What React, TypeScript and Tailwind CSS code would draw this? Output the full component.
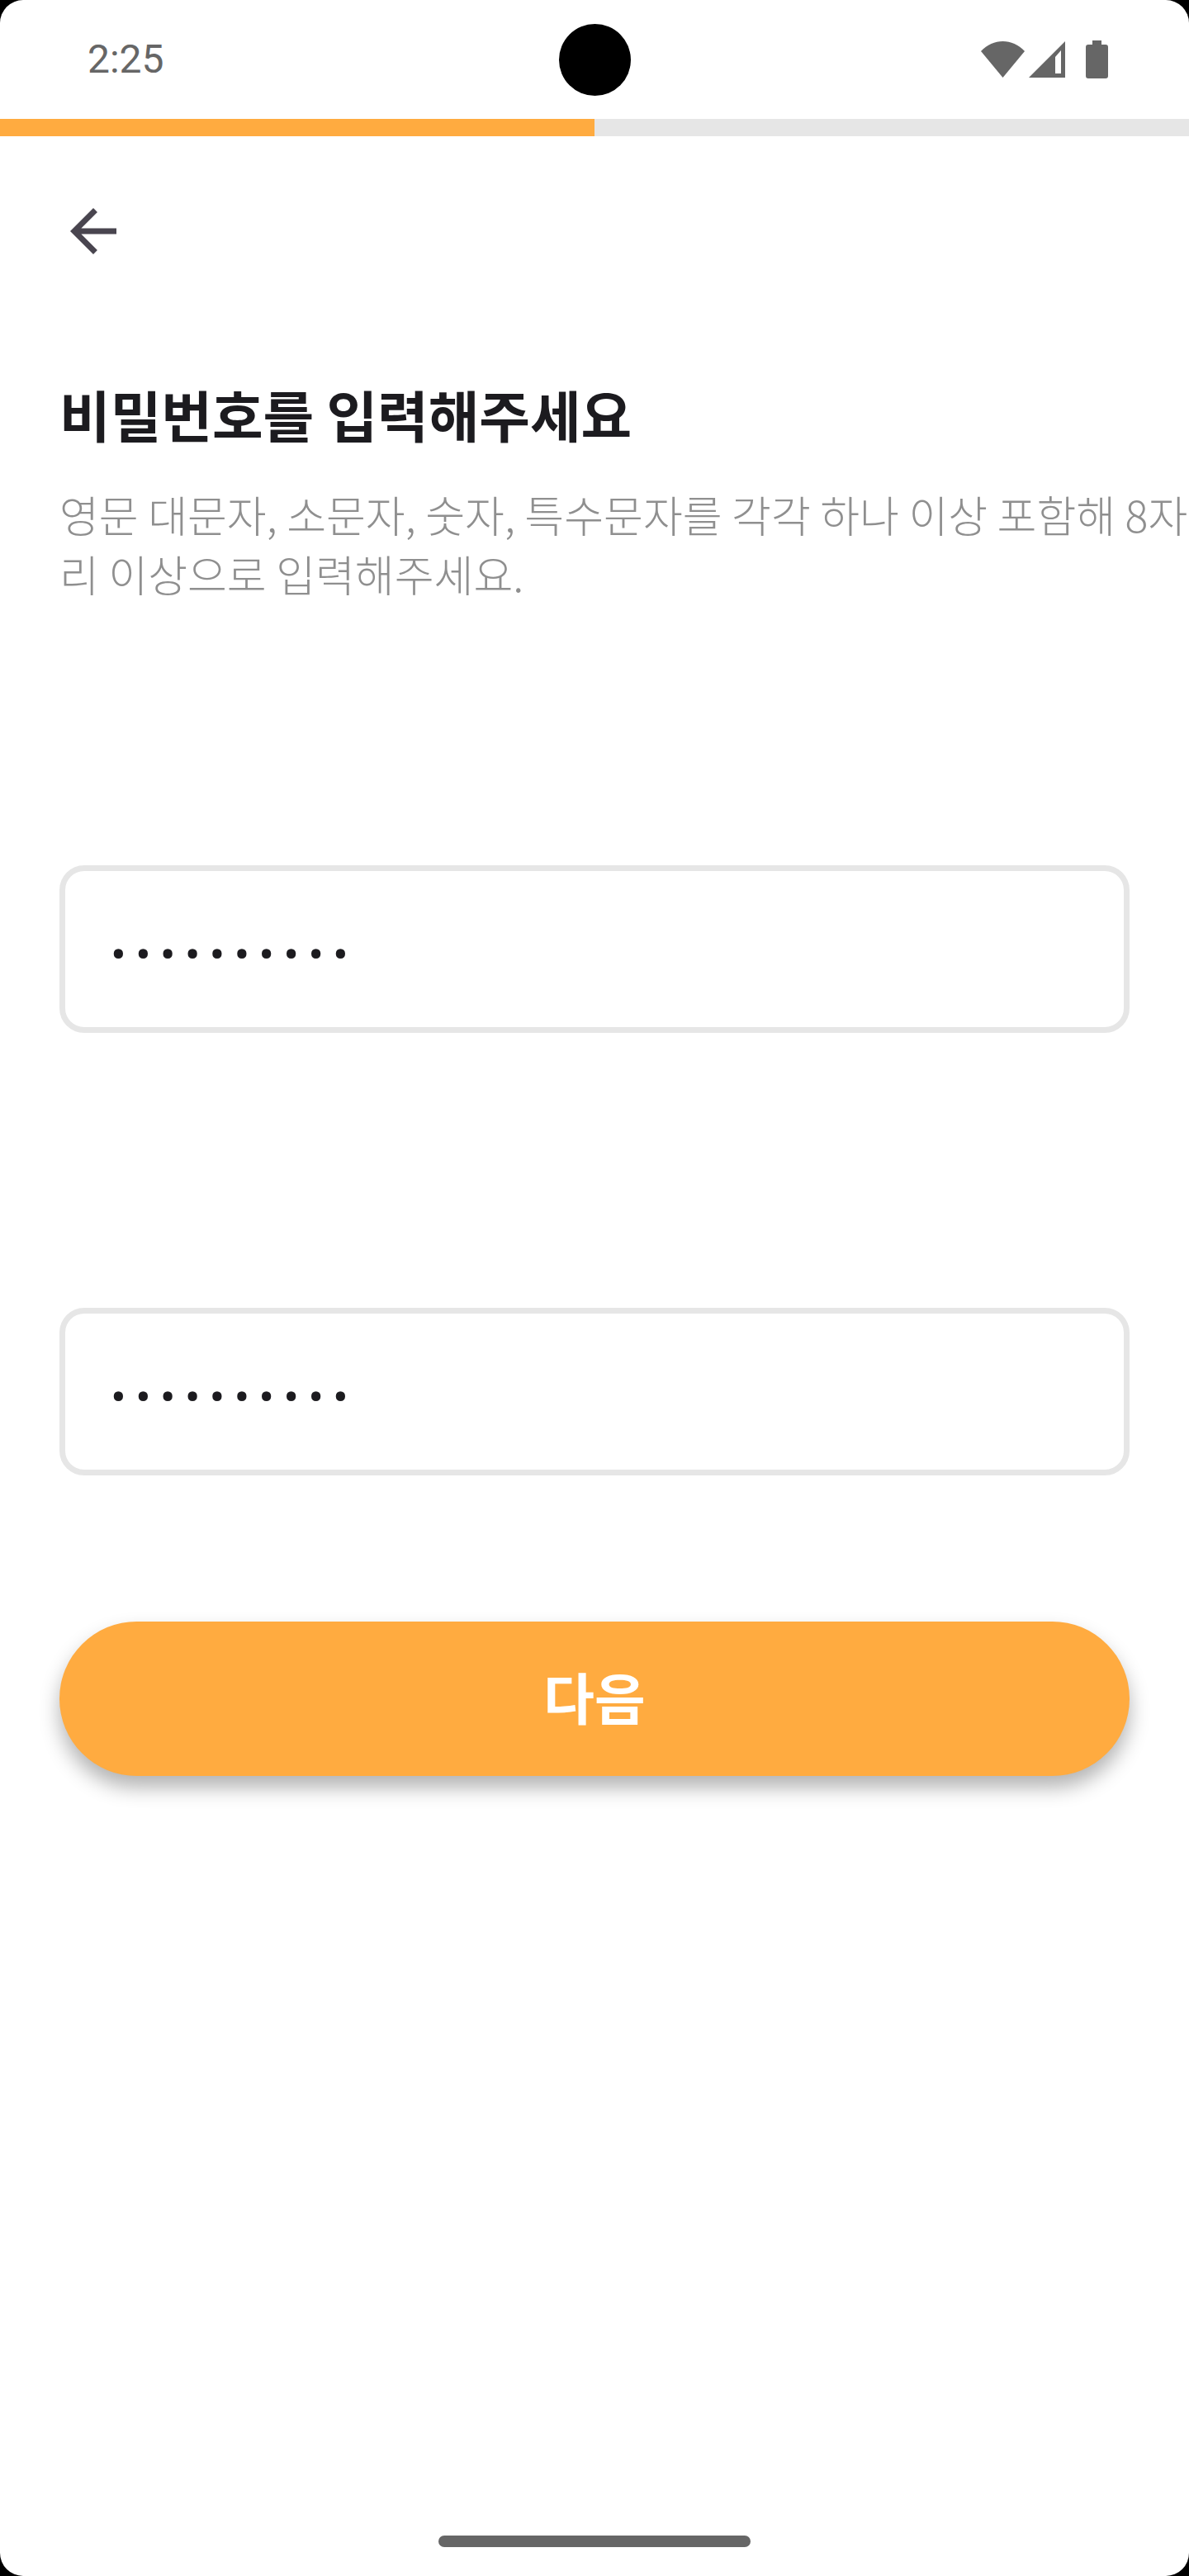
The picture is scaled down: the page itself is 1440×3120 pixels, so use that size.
const FONT = 'font-["Noto_Sans_CJK_KR","Noto_Sans",sans-serif]'

// 상태바 아이콘
function StatusIcons() {
  return (
    <div className="flex items-center gap-[5px] text-[#666666]">
      <svg width="53" height="44" viewBox="0 0 53 44" fill="currentColor">
        <path d="M0 12 C 15 -4, 38 -4, 53 12 L 26.5 44 Z" />
      </svg>
      <svg width="44" height="44" viewBox="0 0 44 44" fill="currentColor">
        <path fillRule="evenodd" d="M44 0 V44 H0 Z M39 11 L32 19 V39 H39 Z" />
      </svg>
      <svg className="ml-[20px]" width="27" height="46" viewBox="0 0 27 46" fill="currentColor">
        <path d="M8 0 H19 V5 H24 A3 3 0 0 1 27 8 V43 A3 3 0 0 1 24 46 H3 A3 3 0 0 1 0 43 V8 A3 3 0 0 1 3 5 H8 Z" />
      </svg>
    </div>
  )
}

function PasswordField() {
  return (
    <div className="flex h-[203px] items-center rounded-[30px] border-[7px] border-[#e6e6e6] bg-white pl-[55px] pt-[14px]">
      <span className="font-['Roboto',sans-serif] text-[56px] leading-none tracking-[11px] text-[#1c1b1f]">••••••••••</span>
    </div>
  )
}

export default function App() {
  return (
    <div className={`h-[3120px] w-[1440px] bg-black ${FONT}`}>
      <div className="relative flex h-full flex-col overflow-hidden rounded-[28px] bg-white">
        {/* 카메라 */}
        <div className="absolute left-[677px] top-[29px] size-[87px] rounded-full bg-black" />

        <div className="flex h-[144px] items-center justify-between pl-[106px] pr-[98px]">
          <span className="font-['Roboto',sans-serif] text-[48px] leading-none text-[#666666]">2:25</span>
          <StatusIcons />
        </div>

        {/* 진행률 */}
        <div className="flex h-[21px] bg-[#e6e6e6]">
          <div className="w-[720px] bg-[#ffab40]" />
        </div>

        <div className="flex flex-1 flex-col px-[72px]">
          <div className="-ml-[1px] mt-[73px] size-[84px]">
            <svg className="size-full text-[#49454f]" viewBox="0 0 24 24" fill="currentColor">
              <path d="M20 11H7.83l5.59-5.59L12 4l-8 8 8 8 1.41-1.41L7.83 13H20v-2z" />
            </svg>
          </div>

          <h1 className="mt-[139px] text-[67px] font-semibold leading-[80px] text-[#1c1b1f]">비밀번호를 입력해주세요</h1>
          <p className="mt-[46px] whitespace-nowrap text-[52px] font-light leading-[72px] text-[#8f8f8f]">
            영문 대문자, 소문자, 숫자, 특수문자를 각각 하나 이상 포함해 8자
            <br />
            리 이상으로 입력해주세요.
          </p>

          <div className="mt-[317px]">
            <PasswordField />
          </div>
          <div className="mt-[333px]">
            <PasswordField />
          </div>

          <button className="mt-[177px] h-[187px] rounded-full bg-[#ffab40] pb-[6px] text-[67px] font-semibold text-white shadow-[0_14px_24px_rgba(0,0,0,0.3)]">
            다음
          </button>
        </div>

        <div className="mb-[35px] flex justify-center">
          <div className="h-[14px] w-[378px] rounded-full bg-[#666666]" />
        </div>
      </div>
    </div>
  )
}
